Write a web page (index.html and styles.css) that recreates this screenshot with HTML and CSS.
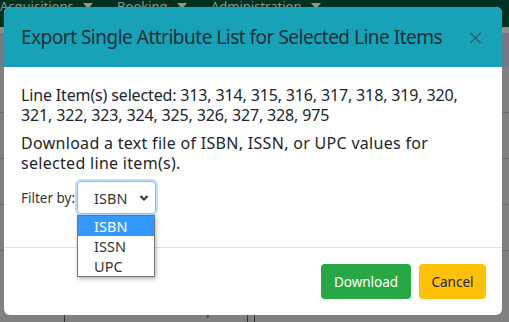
FILE: index.html
```html
<!DOCTYPE html>
<html lang="en">
<head>
    <meta charset="UTF-8">
    <meta name="viewport" content="width=device-width, initial-scale=1.0">
    <title>Export Single Attribute List</title>
    <link rel="stylesheet" href="styles.css">
</head>
<body>
    <div class="page">
        <nav class="topnav">
            <span class="nav-item">Acquisitions <span class="caret"></span></span>
            <span class="nav-item">Booking <span class="caret"></span></span>
            <span class="nav-item">Administration <span class="caret"></span></span>
        </nav>
        <div class="subbar"></div>
        <div class="page-body">
            <div class="row-line"></div>
            <div class="row-line"></div>
            <div class="row-line"></div>
            <div class="row-line"></div>
        </div>
        <div class="page-bottom">
            <div class="cell cell-a">Closed</div>
            <div class="cell cell-b">Show Filter Search Options</div>
            <div class="cell"></div>
        </div>
    </div>

    <div class="modal">
        <div class="modal-header">
            <h5 class="modal-title">Export Single Attribute List for Selected Line Items</h5>
            <span class="close">&times;</span>
        </div>
        <div class="modal-body">
            <p class="lead lead-ids">Line Item(s) selected: 313, 314, 315, 316, 317, 318, 319, 320, 321, 322, 323, 324, 325, 326, 327, 328, 975</p>
            <p class="lead lead-desc">Download a text file of ISBN, ISSN, or UPC values for selected line item(s).</p>
            <div class="filter-row">
                <label class="filter-label">Filter by:</label>
                <div class="select-wrap">
                    <div class="select">
                        <span>ISBN</span>
                        <svg class="chevron" width="10" height="8" viewBox="0 0 10 8">
                            <path d="M1.5 2 L5 5.5 L8.5 2" fill="none" stroke="#333" stroke-width="2"/>
                        </svg>
                    </div>
                    <ul class="options">
                        <li class="selected">ISBN</li>
                        <li>ISSN</li>
                        <li>UPC</li>
                    </ul>
                </div>
            </div>
        </div>
        <div class="modal-footer">
            <button class="btn btn-success">Download</button>
            <button class="btn btn-warning">Cancel</button>
        </div>
    </div>
</body>
</html>
```

FILE: styles.css
```css
body {
    margin: 0;
    font-family: "Noto Sans", "Open Sans", sans-serif;
    background: #808080;
    overflow: hidden;
}

.page {
    height: 322px;
    display: flex;
    flex-direction: column;
}

.topnav {
    height: 27px;
    background: #00301f;
    color: #8a9890;
    font-size: 13px;
    display: flex;
    gap: 24px;
    padding-left: 0;
    line-height: 13px;
    overflow: hidden;
}

.nav-item {
    white-space: nowrap;
}

.caret {
    display: inline-block;
    width: 0;
    height: 0;
    margin-left: 6px;
    vertical-align: 2px;
    border-left: 5px solid transparent;
    border-right: 5px solid transparent;
    border-top: 6px solid #8a9890;
}

.subbar {
    height: 34px;
    background: #6f7a85;
    border-top: 6px solid #8c8c8c;
}

.page-body {
    flex: 1;
}

.row-line {
    height: 45px;
    border-bottom: 1px solid #6a6a6a;
}

.page-bottom {
    height: 22px;
    display: flex;
    font-size: 14px;
    color: #333;
    line-height: 18px;
}

.cell {
    border-right: 1px solid #333;
    padding-left: 6px;
    overflow: hidden;
    white-space: nowrap;
}

.cell-a {
    width: 58px;
}

.cell-b {
    width: 176px;
}

/* modal dialog */
.modal {
    position: absolute;
    left: 4px;
    top: 7px;
    width: 498px;
    height: 308px;
    background: #fff;
    border-radius: 6px;
    display: flex;
    flex-direction: column;
    color: #212529;
}

.modal-header {
    height: 60px;
    background: #17a2b8;
    border-radius: 6px 6px 0 0;
    display: flex;
    align-items: center;
    justify-content: space-between;
    padding: 0 17px;
}

.modal-title {
    margin: 0;
    font-size: 19px;
    font-weight: 400;
    letter-spacing: -0.5px;
    color: #1e2f36;
}

.close {
    font-size: 26px;
    font-weight: 300;
    color: #2b5f68;
    margin-right: 2px;
}

.modal-body {
    padding: 18px 17px 0;
    height: 162px;
    border-bottom: 1px solid #dee2e6;
}

.lead {
    margin: 0 0 8px;
    font-size: 16px;
    line-height: 20px;
}

.lead-ids {
    letter-spacing: -0.15px;
}

.lead-desc {
    letter-spacing: 0.3px;
}

.filter-row {
    display: flex;
    align-items: center;
    gap: 2px;
}

.filter-label {
    font-size: 13.5px;
    color: #333;
}

.select-wrap {
    position: relative;
}

.select {
    height: 31px;
    width: 55px;
    border: 1px solid #80bdff;
    border-radius: 4px;
    box-shadow: 0 0 0 2px rgba(0, 123, 255, 0.25);
    display: flex;
    align-items: center;
    justify-content: space-between;
    padding: 0 6px 0 16px;
    font-size: 14.5px;
    color: #333;
}

.options {
    position: absolute;
    top: 34px;
    left: 0;
    width: 76px;
    margin: 0;
    padding: 0;
    list-style: none;
    background: #fff;
    border: 1px solid #767676;
    box-shadow: 1px 2px 4px rgba(0, 0, 0, 0.3);
    font-size: 14.5px;
    color: #333;
}

.options li {
    height: 20px;
    line-height: 20px;
    padding-left: 16px;
}

.options li.selected {
    background: #3399ff;
    color: #fff;
}

.modal-footer {
    flex: 1;
    display: flex;
    justify-content: flex-end;
    align-items: flex-start;
    gap: 8px;
    padding: 16px 16px 0;
}

.btn {
    height: 35px;
    border: none;
    border-radius: 4px;
    font-family: inherit;
    font-size: 13.5px;
    padding: 0 12px;
}

.btn-success {
    background: #28a745;
    color: #fff;
    width: 90px;
}

.btn-warning {
    background: #ffc107;
    color: #212529;
    width: 67px;
}
```
